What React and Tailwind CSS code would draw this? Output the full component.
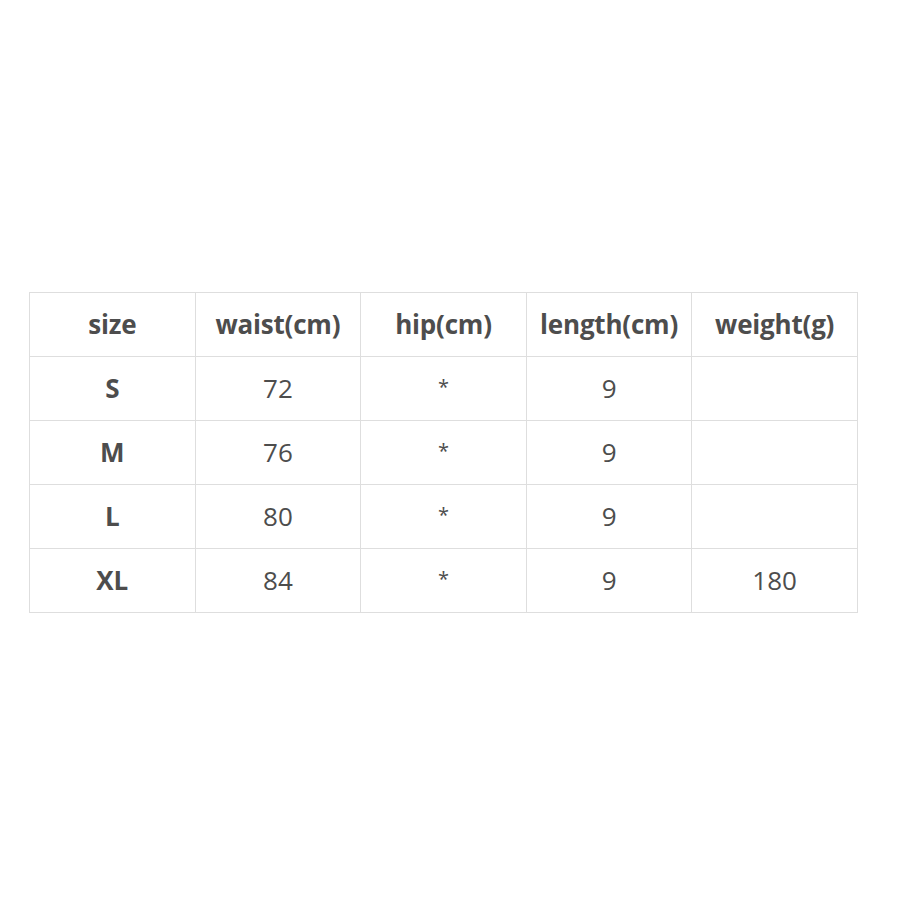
import React from 'react';

const headers = ['size', 'waist(cm)', 'hip(cm)', 'length(cm)', 'weight(g)'];
const rows = [
  ['S', '72', '*', '9', ''],
  ['M', '76', '*', '9', ''],
  ['L', '80', '*', '9', ''],
  ['XL', '84', '*', '9', '180'],
];

export default function App() {
  return (
    <div className="w-[908px] h-[908px] bg-white pt-[292px] pl-[29px] font-['Open_Sans',sans-serif] text-[#4d4d4d]">
      <table className="border-collapse table-fixed w-[828px]">
        <thead>
          <tr>
            {headers.map((h) => (
              <th key={h} className="border border-[#dedede] h-[64px] w-[165.6px] text-center text-[26px] font-bold p-0 tracking-[-0.2px]">
                {h}
              </th>
            ))}
          </tr>
        </thead>
        <tbody>
          {rows.map((r) => (
            <tr key={r[0]}>
              {r.map((c, i) => (
                <td
                  key={i}
                  className={`border border-[#dedede] h-[64px] text-center p-0 ${i === 0 ? 'font-bold text-[26px]' : 'font-normal text-[26px]'}`}
                >
                  {c === '*' ? <span className="text-[20px] align-[4px]">*</span> : c}
                </td>
              ))}
            </tr>
          ))}
        </tbody>
      </table>
    </div>
  );
}
